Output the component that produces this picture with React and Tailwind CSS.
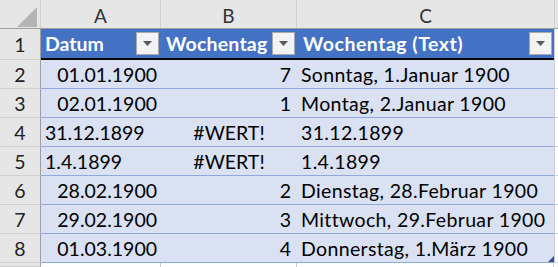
const rows = [
  { n: 2, a: '01.01.1900', aRight: true, b: '7', c: 'Sonntag, 1.Januar 1900' },
  { n: 3, a: '02.01.1900', aRight: true, b: '1', c: 'Montag, 2.Januar 1900' },
  { n: 4, a: '31.12.1899', aRight: false, b: '#WERT!', err: true, c: '31.12.1899' },
  { n: 5, a: '1.4.1899', aRight: false, b: '#WERT!', err: true, c: '1.4.1899' },
  { n: 6, a: '28.02.1900', aRight: true, b: '2', c: 'Dienstag, 28.Februar 1900' },
  { n: 7, a: '29.02.1900', aRight: true, b: '3', c: 'Mittwoch, 29.Februar 1900' },
  { n: 8, a: '01.03.1900', aRight: true, b: '4', c: 'Donnerstag, 1.März 1900', last: true },
];

const FilterButton = () => (
  <div className="w-[23px] h-[23px] mr-[2px] shrink-0 bg-[#f3f3f3] border border-[#a9a9a9] flex items-center justify-center">
    <svg width="9" height="5" viewBox="0 0 9 5">
      <path d="M0 0 H9 L4.5 5 Z" fill="#5a5a5a" />
    </svg>
  </div>
);

const RowHead = ({ children, className = '' }) => (
  <div
    className={`w-[41px] shrink-0 bg-[#e6e6e6] border-r border-r-[#9e9e9e] border-b border-b-[#d0d0d0] flex items-center justify-center text-[#222] ${className}`}
  >
    {children}
  </div>
);

export default function App() {
  return (
    <div
      className="w-[558px] h-[267px] overflow-hidden bg-white flex flex-col text-[19.5px] leading-none text-black"
      style={{ fontFamily: 'Lato, "Open Sans", sans-serif' }}
    >
      {/* column letters */}
      <div className="flex h-[29px] shrink-0 bg-[#e6e6e6] border-b border-[#9e9e9e] text-[#333] text-[19px]">
        <div className="w-[41px] shrink-0 border-r border-[#d0d0d0] relative">
          <svg className="absolute left-[17px] top-[7px]" width="20" height="20" viewBox="0 0 20 20">
            <path d="M20 0 V20 H0 Z" fill="#b5b5b5" />
          </svg>
        </div>
        <div className="w-[120px] shrink-0 border-r border-[#d0d0d0] flex items-center justify-center pt-[2px]">A</div>
        <div className="w-[136px] shrink-0 border-r border-[#d0d0d0] flex items-center justify-center pt-[2px]">B</div>
        <div className="w-[258px] shrink-0 border-r border-[#d0d0d0] flex items-center justify-center pt-[2px]">C</div>
        <div className="flex-1" />
      </div>

      {/* table header row */}
      <div className="flex h-[31px] shrink-0">
        <RowHead className="pt-[2px]">1</RowHead>
        <div className="flex w-[513px] shrink-0 bg-[#4472c4] border-b-2 border-black text-white font-bold">
          <div className="w-[120px] shrink-0 flex items-center justify-between pl-[4px]">
            <span>Datum</span>
            <FilterButton />
          </div>
          <div className="w-[136px] shrink-0 flex items-center justify-between pl-[5px]">
            <span className="tracking-[0.2px]">Wochentag</span>
            <FilterButton />
          </div>
          <div className="w-[257px] shrink-0 flex items-center justify-between pl-[6px]">
            <span className="tracking-[0.5px]">Wochentag (Text)</span>
            <FilterButton />
          </div>
        </div>
        <div className="flex-1 border-l border-[#d0d0d0] bg-white" />
      </div>

      {/* data rows */}
      {rows.map((r) => (
        <div key={r.n} className="flex h-[29px] shrink-0">
          <RowHead className="pt-[2px]">{r.n}</RowHead>
          <div className="flex w-[513px] shrink-0 bg-[#d9e1f2] border-b border-[#8ea9db]">
            <div
              className={`w-[120px] shrink-0 flex items-center pt-[2px] ${
                r.aRight ? 'justify-end pr-[4px]' : 'pl-[4px]'
              }`}
            >
              {r.a}
            </div>
            <div
              className={`w-[136px] shrink-0 flex items-center pt-[2px] ${
                r.err ? 'justify-center' : 'justify-end pr-[6px]'
              }`}
            >
              {r.b}
            </div>
            <div className="w-[257px] shrink-0 flex items-center pl-[4px] pt-[2px] relative tracking-[0.35px]">
              {r.c}
              {r.last && (
                <svg className="absolute right-0 bottom-0" width="6" height="6" viewBox="0 0 6 6">
                  <path d="M6 0 V6 H0 Z" fill="#2f4f9a" />
                </svg>
              )}
            </div>
          </div>
          <div className="flex-1 border-l border-[#d0d0d0] bg-white border-b border-b-[#d0d0d0]" />
        </div>
      ))}

      {/* next empty row */}
      <div className="flex flex-1">
        <RowHead />
        <div className="w-[120px] shrink-0 border-r border-[#d0d0d0]" />
        <div className="w-[136px] shrink-0 border-r border-[#d0d0d0]" />
        <div className="w-[257px] shrink-0 border-r border-[#d0d0d0]" />
        <div className="flex-1" />
      </div>
    </div>
  );
}
